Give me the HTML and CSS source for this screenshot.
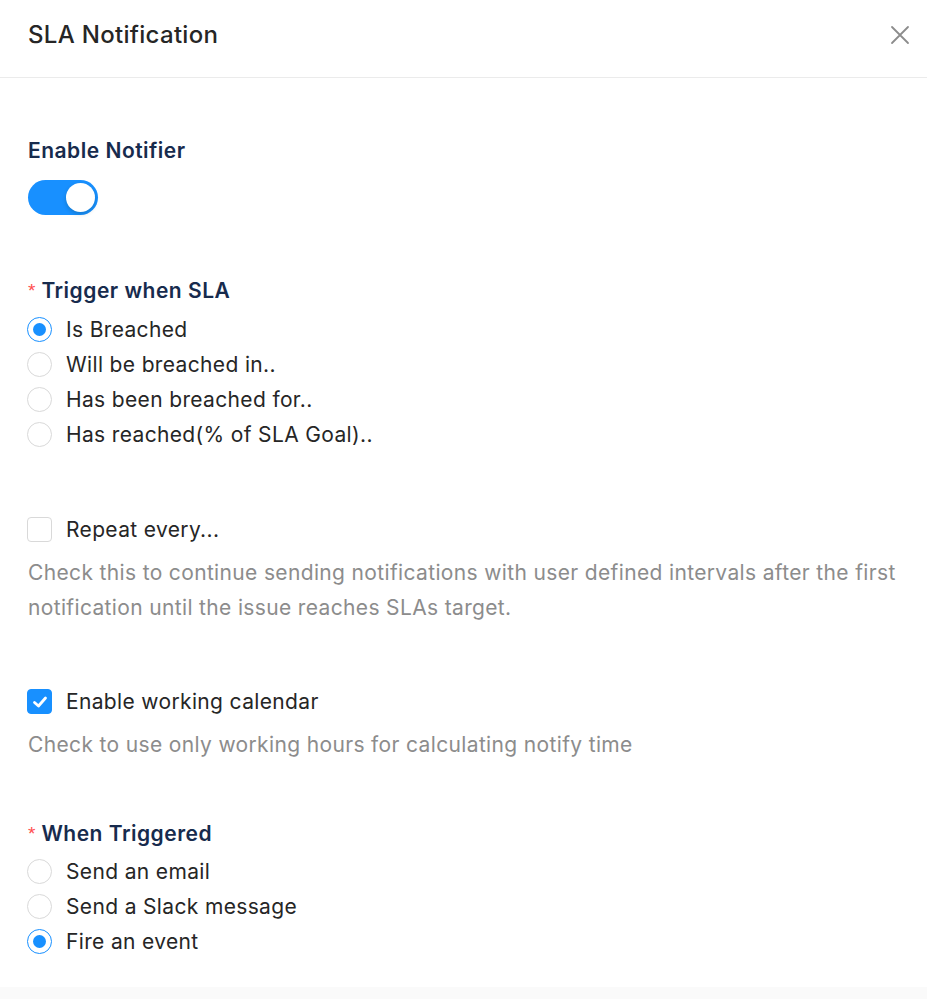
FILE: index.html
```html
<!DOCTYPE html>
<html lang="en">
<head>
<meta charset="utf-8">
<title>SLA Notification</title>
<link rel="stylesheet" href="styles.css">
</head>
<body>
<div class="drawer">
  <header class="drawer-header">
    <h1 class="drawer-title">SLA Notification</h1>
    <button class="close-btn" aria-label="Close">
      <svg width="20" height="20" viewBox="0 0 20 20"><path d="M2 2 L18 18 M18 2 L2 18" stroke="#8c8c8c" stroke-width="1.8" fill="none" stroke-linecap="round"/></svg>
    </button>
  </header>
  <main class="drawer-body">
    <section class="field field-first">
      <div class="field-label">Enable Notifier</div>
      <div class="switch"><span class="switch-knob"></span></div>
    </section>

    <section class="field field-trigger">
      <div class="field-label"><span class="req">*</span>Trigger when SLA</div>
      <div class="radio-group">
        <label class="option"><span class="radio checked"></span>Is Breached</label>
        <label class="option"><span class="radio"></span>Will be breached in..</label>
        <label class="option"><span class="radio"></span>Has been breached for..</label>
        <label class="option"><span class="radio"></span>Has reached(% of SLA Goal)..</label>
      </div>
    </section>

    <section class="field field-check">
      <label class="option"><span class="checkbox"></span>Repeat every...</label>
      <p class="help">Check this to continue sending notifications with user defined intervals after the first notification until the issue reaches SLAs target.</p>
    </section>

    <section class="field field-check">
      <label class="option"><span class="checkbox checked"><svg width="18" height="18" viewBox="0 0 18 18"><path d="M3.5 9.5 L7.5 13 L14.5 5" stroke="#fff" stroke-width="2.8" fill="none" stroke-linecap="round" stroke-linejoin="round"/></svg></span>Enable working calendar</label>
      <p class="help">Check to use only working hours for calculating notify time</p>
    </section>

    <section class="field field-when">
      <div class="field-label"><span class="req">*</span>When Triggered</div>
      <div class="radio-group">
        <label class="option"><span class="radio"></span>Send an email</label>
        <label class="option"><span class="radio"></span>Send a Slack message</label>
        <label class="option"><span class="radio checked"></span>Fire an event</label>
      </div>
    </section>
  </main>
  <footer class="drawer-footer"></footer>
</div>
</body>
</html>
```

FILE: styles.css
```css
* { box-sizing: border-box; }
html, body {
  margin: 0;
  padding: 0;
  background: #fff;
}
body {
  font-family: Inter, "Liberation Sans", Arial, sans-serif;
  color: #262626;
}
.drawer {
  width: 927px;
  height: 999px;
  display: flex;
  flex-direction: column;
  overflow: hidden;
}
.drawer-header {
  height: 78px;
  flex: none;
  display: flex;
  align-items: flex-start;
  justify-content: space-between;
  padding: 0 17px 0 28px;
  border-bottom: 1px solid #ebebeb;
}
.drawer-title {
  margin: 0;
  padding-top: 20px;
  font-size: 24px;
  line-height: 30px;
  font-weight: 500;
  letter-spacing: 0.3px;
  color: #262626;
}
.close-btn {
  margin-top: 25px;
  padding: 0;
  border: 0;
  background: none;
  width: 20px;
  height: 20px;
  display: block;
}
.close-btn svg { display: block; }
.drawer-body {
  flex: 1;
  padding: 0 28px;
  display: flex;
  flex-direction: column;
}
.field-first { margin-top: 59px; }
.field-trigger { margin-top: 62px; }
.field-check { margin-top: 60px; }
.field-check + .field-check { margin-top: 59px; }
.field-when { margin-top: 58px; }
.field-label {
  font-size: 21px;
  line-height: 28px;
  font-weight: 600;
  letter-spacing: 0.5px;
  color: #172b4d;
  display: flex;
  align-items: center;
}
.req {
  color: #ff4d4f;
  font-weight: 400;
  font-size: 19px;
  margin-right: 6px;
  letter-spacing: 0;
  font-family: "Liberation Sans", Arial, sans-serif;
}
.switch {
  margin-top: 15px;
  width: 70px;
  height: 35px;
  border-radius: 18px;
  background: #1890ff;
  position: relative;
}
.switch-knob {
  position: absolute;
  top: 3px;
  right: 3px;
  width: 29px;
  height: 29px;
  border-radius: 50%;
  background: #fff;
  box-shadow: 0 2px 4px rgba(0, 35, 11, 0.2);
}
.radio-group {
  margin-top: 7px;
  display: flex;
  flex-direction: column;
}
.field-when .radio-group { margin-top: 6px; }
.option {
  display: flex;
  align-items: center;
  height: 35px;
  font-size: 21px;
  letter-spacing: 0.35px;
  color: #262626;
}
.radio {
  flex: none;
  width: 25px;
  height: 25px;
  border-radius: 50%;
  border: 1.5px solid #d9d9d9;
  margin-left: -1px;
  margin-right: 14px;
  display: flex;
  align-items: center;
  justify-content: center;
  background: #fff;
}
.radio.checked { border-color: #1890ff; }
.radio.checked::after {
  content: "";
  width: 13px;
  height: 13px;
  border-radius: 50%;
  background: #1890ff;
}
.checkbox {
  flex: none;
  width: 25px;
  height: 25px;
  border-radius: 4px;
  border: 1.5px solid #d9d9d9;
  margin-left: -1px;
  margin-right: 14px;
  display: flex;
  align-items: center;
  justify-content: center;
}
.checkbox.checked {
  background: #1890ff;
  border-color: #1890ff;
}
.checkbox svg { display: block; }
.help {
  margin: 8px 0 0;
  font-size: 21px;
  line-height: 35px;
  letter-spacing: 0.35px;
  color: #8c8c8c;
}
.drawer-footer {
  flex: none;
  height: 12px;
  background: #fafafa;
}
```
